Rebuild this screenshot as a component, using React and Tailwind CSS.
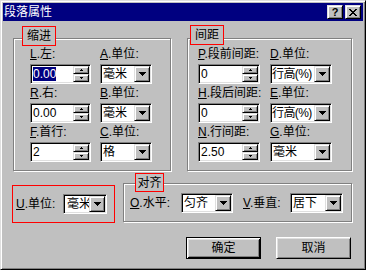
const raised =
  'border border-t-white border-l-white border-r-black border-b-black shadow-[inset_1px_1px_0_#dfdfdf,inset_-1px_-1px_0_#808080]'
const raisedLight =
  'border border-t-[#dfdfdf] border-l-[#dfdfdf] border-r-black border-b-black shadow-[inset_1px_1px_0_#fff,inset_-1px_-1px_0_#808080]'
const sunken =
  'border border-t-[#808080] border-l-[#808080] border-r-white border-b-white shadow-[inset_1px_1px_0_#000,inset_-1px_-1px_0_#dfdfdf]'
const etched = 'border border-[#808080] shadow-[inset_1px_1px_0_#fff,1px_1px_0_#fff]'

function DownArrow() {
  return (
    <svg width="7" height="4" viewBox="0 0 7 4" shapeRendering="crispEdges" fill="#000">
      <rect x="0" y="0" width="7" height="1" />
      <rect x="1" y="1" width="5" height="1" />
      <rect x="2" y="2" width="3" height="1" />
      <rect x="3" y="3" width="1" height="1" />
    </svg>
  )
}

function SpinArrow({ up }) {
  return (
    <svg width="3" height="2" viewBox="0 0 3 2" shapeRendering="crispEdges" fill="#000">
      {up ? (
        <>
          <rect x="1" y="0" width="1" height="1" />
          <rect x="0" y="1" width="3" height="1" />
        </>
      ) : (
        <>
          <rect x="0" y="0" width="3" height="1" />
          <rect x="1" y="1" width="1" height="1" />
        </>
      )}
    </svg>
  )
}

function Spin({ value, selected }) {
  return (
    <div className={`flex h-[20px] w-full bg-white p-[1px] ${sunken}`}>
      <div className="flex-1 overflow-hidden whitespace-nowrap pl-[1px] leading-[16px]">
        {selected ? <span className="bg-[#000080] text-white">{value}</span> : value}
      </div>
      <div className="flex w-[16px] flex-col">
        <div className={`flex h-[8px] items-center justify-center bg-[#c0c0c0] ${raisedLight}`}>
          <SpinArrow up />
        </div>
        <div className={`flex h-[8px] items-center justify-center bg-[#c0c0c0] ${raisedLight}`}>
          <SpinArrow />
        </div>
      </div>
    </div>
  )
}

function Combo({ value, className = 'w-full', textClass = 'pl-[1px]' }) {
  return (
    <div className={`flex h-[20px] bg-white p-[1px] ${sunken} ${className}`}>
      <div className={`flex-1 overflow-hidden whitespace-nowrap leading-[16px] ${textClass}`}>{value}</div>
      <div className={`flex h-[16px] w-[16px] shrink-0 items-center justify-center bg-[#c0c0c0] ${raisedLight}`}>
        <DownArrow />
      </div>
    </div>
  )
}

function Label({ k, text }) {
  return (
    <div className="h-[17px] whitespace-nowrap leading-[14px]">
      <span className="underline">{k}</span>.{text}:
    </div>
  )
}

function Cell({ k, text, children }) {
  return (
    <div className="flex flex-col">
      <Label k={k} text={text} />
      {children}
    </div>
  )
}

function Legend({ text, className }) {
  return (
    <div
      className={`absolute flex items-center justify-center border border-[#f00] bg-[#c0c0c0] leading-[14px] ${className}`}
    >
      {text}
    </div>
  )
}

function Button({ children, isDefault }) {
  if (isDefault) {
    return (
      <div className="h-[22px] w-[75px] border border-black">
        <div className="flex h-full w-full items-center justify-center bg-[#c0c0c0] shadow-[inset_1px_1px_0_#fff,inset_-1px_-1px_0_#000,inset_2px_2px_0_#dfdfdf,inset_-2px_-2px_0_#808080]">
          {children}
        </div>
      </div>
    )
  }
  return (
    <div className={`flex h-[22px] w-[75px] items-center justify-center bg-[#c0c0c0] ${raised}`}>
      {children}
    </div>
  )
}

export default function App() {
  return (
    <div className="h-[270px] w-[366px] border border-t-[#dfdfdf] border-l-[#dfdfdf] border-r-black border-b-black bg-[#c0c0c0] p-[2px] font-['Liberation_Sans','Noto_Sans_CJK_SC',sans-serif] text-[12px] text-black shadow-[inset_1px_1px_0_#fff,inset_-1px_-1px_0_#808080]">
      {/* title bar */}
      <div className="flex h-[18px] items-center justify-between bg-[#000080] pl-[1px] pr-[2px]">
        <span className="leading-[18px] text-white">段落属性</span>
        <div className="flex gap-[2px]">
          <div className={`flex h-[14px] w-[16px] items-center justify-center bg-[#c0c0c0] ${raisedLight}`}>
            <span className="text-[11px] font-bold leading-[12px]">?</span>
          </div>
          <div className={`flex h-[14px] w-[16px] items-center justify-center bg-[#c0c0c0] ${raisedLight}`}>
            <svg width="8" height="7" viewBox="0 0 8 7" shapeRendering="crispEdges" fill="#000">
              <rect x="0" y="0" width="2" height="1" />
              <rect x="6" y="0" width="2" height="1" />
              <rect x="1" y="1" width="2" height="1" />
              <rect x="5" y="1" width="2" height="1" />
              <rect x="2" y="2" width="4" height="1" />
              <rect x="3" y="3" width="2" height="1" />
              <rect x="2" y="4" width="4" height="1" />
              <rect x="1" y="5" width="2" height="1" />
              <rect x="5" y="5" width="2" height="1" />
              <rect x="0" y="6" width="2" height="1" />
              <rect x="6" y="6" width="2" height="1" />
            </svg>
          </div>
        </div>
      </div>

      {/* upper group boxes */}
      <div className="ml-[10px] mt-[17px] flex gap-[16px]">
        <div className={`relative h-[133px] w-[158px] pl-[16px] pt-[8px] ${etched}`}>
          <Legend text="缩进" className="-top-[13px] left-[8px] h-[20px] w-[34px]" />
          <div className="grid grid-cols-[61px_52px] gap-x-[9px] gap-y-[2px]">
            <Cell k="L" text="左">
              <Spin value="0.00" selected />
            </Cell>
            <Cell k="A" text="单位">
              <Combo value="毫米" />
            </Cell>
            <Cell k="R" text="右">
              <Spin value="0.00" />
            </Cell>
            <Cell k="B" text="单位">
              <Combo value="毫米" />
            </Cell>
            <Cell k="F" text="首行">
              <Spin value="2" />
            </Cell>
            <Cell k="C" text="单位">
              <Combo value="格" />
            </Cell>
          </div>
        </div>

        <div className={`relative h-[133px] w-[165px] pl-[10px] pt-[8px] ${etched}`}>
          <Legend text="间距" className="-top-[14px] left-[2px] h-[20px] w-[34px]" />
          <div className="grid grid-cols-[62px_62px] gap-x-[10px] gap-y-[2px]">
            <Cell k="P" text="段前间距">
              <Spin value="0" />
            </Cell>
            <Cell k="D" text="单位">
              <Combo value="行高(%)" textClass="tracking-[-0.6px]" />
            </Cell>
            <Cell k="H" text="段后间距">
              <Spin value="0" />
            </Cell>
            <Cell k="E" text="单位">
              <Combo value="行高(%)" textClass="tracking-[-0.6px]" />
            </Cell>
            <Cell k="N" text="行间距">
              <Spin value="2.50" />
            </Cell>
            <Cell k="G" text="单位">
              <Combo value="毫米" />
            </Cell>
          </div>
        </div>
      </div>

      {/* bottom row */}
      <div className="ml-[9px] mt-[12px] flex items-start">
        <div className="mt-[2px] flex h-[38px] w-[103px] items-center border border-[#f00] pl-[3px]">
          <span className="w-[47px] whitespace-nowrap">
            <span className="underline">U</span>.单位:
          </span>
          <Combo value="毫米" className="w-[44px]" textClass="pl-[2px]" />
        </div>
        <div className={`relative ml-[8px] flex h-[39px] w-[229px] items-center pl-[6px] ${etched}`}>
          <Legend text="对齐" className="-top-[11px] left-[11px] h-[19px] w-[29px]" />
          <span className="w-[51px] whitespace-nowrap">
            <span className="underline">O</span>.水平:
          </span>
          <Combo value="匀齐" className="w-[52px]" />
          <span className="ml-[10px] w-[47px] whitespace-nowrap">
            <span className="underline">V</span>.垂直:
          </span>
          <Combo value="居下" className="w-[53px]" />
        </div>
      </div>

      {/* buttons */}
      <div className="mt-[14px] flex justify-end gap-[15px] pr-[12px]">
        <Button isDefault>确定</Button>
        <Button>取消</Button>
      </div>
    </div>
  )
}
